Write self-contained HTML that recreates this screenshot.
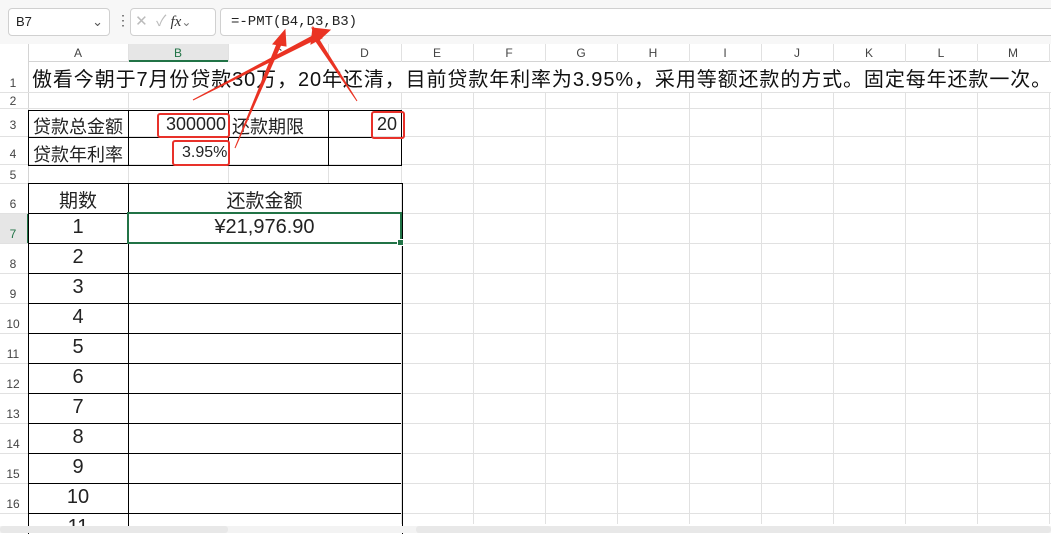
<!DOCTYPE html><html><head><meta charset="utf-8"><style>
body{margin:0;width:1051px;height:533px;overflow:hidden;background:#fff;font-family:"Liberation Sans","Noto Sans CJK SC",sans-serif;position:relative}
.a{position:absolute}
.vl{position:absolute;width:1px;background:#e1e1e1}
.hl{position:absolute;height:1px;background:#e1e1e1}
.ch{position:absolute;top:45px;height:16px;font-size:12px;color:#444;text-align:center;line-height:16px}
.rh{position:absolute;left:0;width:26px;font-size:12px;color:#444;text-align:center}
.t{position:absolute;font-size:18px;color:#222;white-space:nowrap}
</style></head><body>
<div class="a" style="left:0;top:0;width:1051px;height:44px;background:#f7f7f7"></div>
<div class="a" style="left:8px;top:8px;width:100px;height:26px;border:1px solid #d0d0d0;border-radius:4px;background:#fff;font-size:13px;line-height:26px;text-indent:7px;color:#222">B7<span style="position:absolute;right:6px;color:#555">⌄</span></div>
<div class="a" style="left:116px;top:12px;font-size:14px;color:#555">⋮</div>
<div class="a" style="left:130px;top:8px;width:84px;height:26px;border:1px solid #d0d0d0;border-radius:4px;background:#fff;font-size:15px;line-height:26px;color:#bbb">&nbsp;✕ &nbsp;✓ <i style="color:#333;font-family:'Liberation Serif',serif">fx</i><span style="color:#777;font-size:12px">⌄</span></div>
<div class="a" style="left:220px;top:8px;width:840px;height:26px;border:1px solid #d0d0d0;border-radius:4px;background:#fff;font-family:'Liberation Mono',monospace;font-size:14px;line-height:26px;text-indent:10px;color:#222">=-PMT(B4,D3,B3)</div>
<div class="a" style="left:0;top:44px;width:1051px;height:17px;background:#fff;border-bottom:1px solid #d4d4d4"></div>
<div class="a" style="left:0;top:44px;width:28px;height:489px;background:#fff;border-right:1px solid #d4d4d4"></div>
<div class="a" style="left:128px;top:44px;width:100px;height:16px;background:#e6e6e6;border-bottom:2px solid #217346"></div>
<div class="a" style="left:0;top:213px;width:27px;height:30px;background:#e6e6e6;border-right:2px solid #217346"></div>
<div class="ch" style="left:28px;width:100px">A</div><div class="ch" style="left:128px;width:100px;color:#217346">B</div><div class="ch" style="left:228px;width:100px">C</div><div class="ch" style="left:328px;width:73px">D</div>
<div class="ch" style="left:401px;width:72px">E</div><div class="ch" style="left:473px;width:72px">F</div><div class="ch" style="left:545px;width:72px">G</div><div class="ch" style="left:617px;width:72px">H</div><div class="ch" style="left:689px;width:72px">I</div><div class="ch" style="left:761px;width:72px">J</div><div class="ch" style="left:833px;width:72px">K</div><div class="ch" style="left:905px;width:72px">L</div><div class="ch" style="left:977px;width:72px">M</div>
<div class="vl" style="left:128px;top:44px;height:480px"></div><div class="vl" style="left:228px;top:44px;height:140px"></div><div class="vl" style="left:328px;top:44px;height:140px"></div><div class="vl" style="left:401px;top:44px;height:480px"></div>
<div class="vl" style="left:473px;top:44px;height:480px"></div><div class="vl" style="left:545px;top:44px;height:480px"></div><div class="vl" style="left:617px;top:44px;height:480px"></div><div class="vl" style="left:689px;top:44px;height:480px"></div><div class="vl" style="left:761px;top:44px;height:480px"></div><div class="vl" style="left:833px;top:44px;height:480px"></div><div class="vl" style="left:905px;top:44px;height:480px"></div><div class="vl" style="left:977px;top:44px;height:480px"></div><div class="vl" style="left:1049px;top:44px;height:480px"></div>
<div class="a" style="left:29px;top:62px;width:1022px;height:30px;background:#fff"></div>
<div class="hl" style="left:0;top:92px;width:1051px"></div><div class="hl" style="left:0;top:108px;width:1051px"></div><div class="hl" style="left:0;top:136px;width:1051px"></div><div class="hl" style="left:0;top:164px;width:1051px"></div><div class="hl" style="left:0;top:183px;width:1051px"></div><div class="hl" style="left:0;top:213px;width:1051px"></div><div class="hl" style="left:0;top:243px;width:1051px"></div><div class="hl" style="left:0;top:273px;width:1051px"></div><div class="hl" style="left:0;top:303px;width:1051px"></div><div class="hl" style="left:0;top:333px;width:1051px"></div><div class="hl" style="left:0;top:363px;width:1051px"></div><div class="hl" style="left:0;top:393px;width:1051px"></div><div class="hl" style="left:0;top:423px;width:1051px"></div><div class="hl" style="left:0;top:453px;width:1051px"></div><div class="hl" style="left:0;top:483px;width:1051px"></div><div class="hl" style="left:0;top:513px;width:1051px"></div>
<div class="rh" style="top:76px">1</div><div class="rh" style="top:94px">2</div><div class="rh" style="top:118px">3</div><div class="rh" style="top:147px">4</div><div class="rh" style="top:168px">5</div><div class="rh" style="top:197px">6</div><div class="rh" style="top:227px;color:#217346">7</div><div class="rh" style="top:257px">8</div><div class="rh" style="top:287px">9</div><div class="rh" style="top:317px">10</div><div class="rh" style="top:347px">11</div><div class="rh" style="top:377px">12</div><div class="rh" style="top:407px">13</div><div class="rh" style="top:437px">14</div><div class="rh" style="top:467px">15</div><div class="rh" style="top:497px">16</div>
<div class="t" style="left:32px;top:63px;font-size:20px;letter-spacing:0.9px;color:#111">傲看今朝于7月份贷款30万，20年还清，目前贷款年利率为3.95%，采用等额还款的方式。固定每年还款一次。</div>
<div class="a" style="left:28px;top:110px;width:372px;height:54px;border:1px solid #000"></div>
<div class="a" style="left:28px;top:137px;width:373px;height:1px;background:#000"></div>
<div class="a" style="left:128px;top:110px;width:1px;height:55px;background:#000"></div><div class="a" style="left:228px;top:110px;width:1px;height:55px;background:#000"></div><div class="a" style="left:328px;top:110px;width:1px;height:55px;background:#000"></div>
<div class="t" style="left:33px;top:113px">贷款总金额</div><div class="t" style="left:33px;top:141px">贷款年利率</div>
<div class="t" style="left:166px;top:114px">300000</div><div class="t" style="left:182px;top:144px;font-size:16px">3.95%</div>
<div class="t" style="left:232px;top:113px">还款期限</div><div class="t" style="left:377px;top:114px">20</div>
<div class="a" style="left:157px;top:113px;width:69px;height:21px;border:2px solid #e8312a;border-radius:3px"></div>
<div class="a" style="left:172px;top:140px;width:54px;height:22px;border:2px solid #e8312a;border-radius:3px"></div>
<div class="a" style="left:371px;top:111px;width:30px;height:24px;border:2px solid #e8312a;border-radius:3px"></div>
<div class="a" style="left:28px;top:183px;width:373px;height:350px;border-left:1px solid #000;border-right:1px solid #000;border-top:1px solid #000"></div>
<div class="a" style="left:128px;top:183px;width:1px;height:350px;background:#000"></div>
<div class="a" style="left:28px;top:243px;width:373px;height:1px;background:#000"></div><div class="a" style="left:28px;top:273px;width:373px;height:1px;background:#000"></div><div class="a" style="left:28px;top:303px;width:373px;height:1px;background:#000"></div><div class="a" style="left:28px;top:333px;width:373px;height:1px;background:#000"></div><div class="a" style="left:28px;top:363px;width:373px;height:1px;background:#000"></div><div class="a" style="left:28px;top:393px;width:373px;height:1px;background:#000"></div><div class="a" style="left:28px;top:423px;width:373px;height:1px;background:#000"></div><div class="a" style="left:28px;top:453px;width:373px;height:1px;background:#000"></div><div class="a" style="left:28px;top:483px;width:373px;height:1px;background:#000"></div><div class="a" style="left:28px;top:513px;width:373px;height:1px;background:#000"></div><div class="a" style="left:28px;top:213px;width:373px;height:1px;background:#000"></div>
<div class="t" style="left:28px;width:100px;text-align:center;top:186px;font-size:19px">期数</div>
<div class="t" style="left:128px;width:273px;text-align:center;top:186px;font-size:19px">还款金额</div>
<div class="a" style="left:127px;top:212px;width:271px;height:28px;border:2px solid #217346"></div>
<div class="a" style="left:397px;top:239px;width:5px;height:5px;background:#217346;border:1px solid #fff"></div>
<div class="t" style="left:128px;width:273px;text-align:center;top:216px;font-size:20px">¥21,976.90</div>
<div class="t" style="left:28px;width:100px;text-align:center;top:216px;font-size:20px">1</div>
<div class="t" style="left:28px;width:100px;text-align:center;top:246px;font-size:20px">2</div>
<div class="t" style="left:28px;width:100px;text-align:center;top:276px;font-size:20px">3</div>
<div class="t" style="left:28px;width:100px;text-align:center;top:306px;font-size:20px">4</div>
<div class="t" style="left:28px;width:100px;text-align:center;top:336px;font-size:20px">5</div>
<div class="t" style="left:28px;width:100px;text-align:center;top:366px;font-size:20px">6</div>
<div class="t" style="left:28px;width:100px;text-align:center;top:396px;font-size:20px">7</div>
<div class="t" style="left:28px;width:100px;text-align:center;top:426px;font-size:20px">8</div>
<div class="t" style="left:28px;width:100px;text-align:center;top:456px;font-size:20px">9</div>
<div class="t" style="left:28px;width:100px;text-align:center;top:486px;font-size:20px">10</div>
<div class="t" style="left:28px;width:100px;text-align:center;top:516px;font-size:20px">11</div>
<div class="a" style="left:0;top:526px;width:1051px;height:7px;background:#f3f3f3"></div>
<div class="a" style="left:0;top:526px;width:228px;height:7px;background:#e8e8e8;border-radius:3px"></div>
<div class="a" style="left:416px;top:526px;width:635px;height:7px;background:#e8e8e8;border-radius:3px"></div>
<svg class="a" style="left:0;top:0" width="1051" height="533">
<g stroke="#ea3323" fill="#ea3323">
<polygon points="193,100 320,37 318,33"/><polygon points="330,30 312,28 318,41"/>
<polygon points="235,148 283,40 279,39"/><polygon points="285,30 273,44 286,46"/>
<polygon points="357,101 318,38 315,40"/><polygon points="313,27 311,44 322,38"/>
</g></svg>
</body></html>
